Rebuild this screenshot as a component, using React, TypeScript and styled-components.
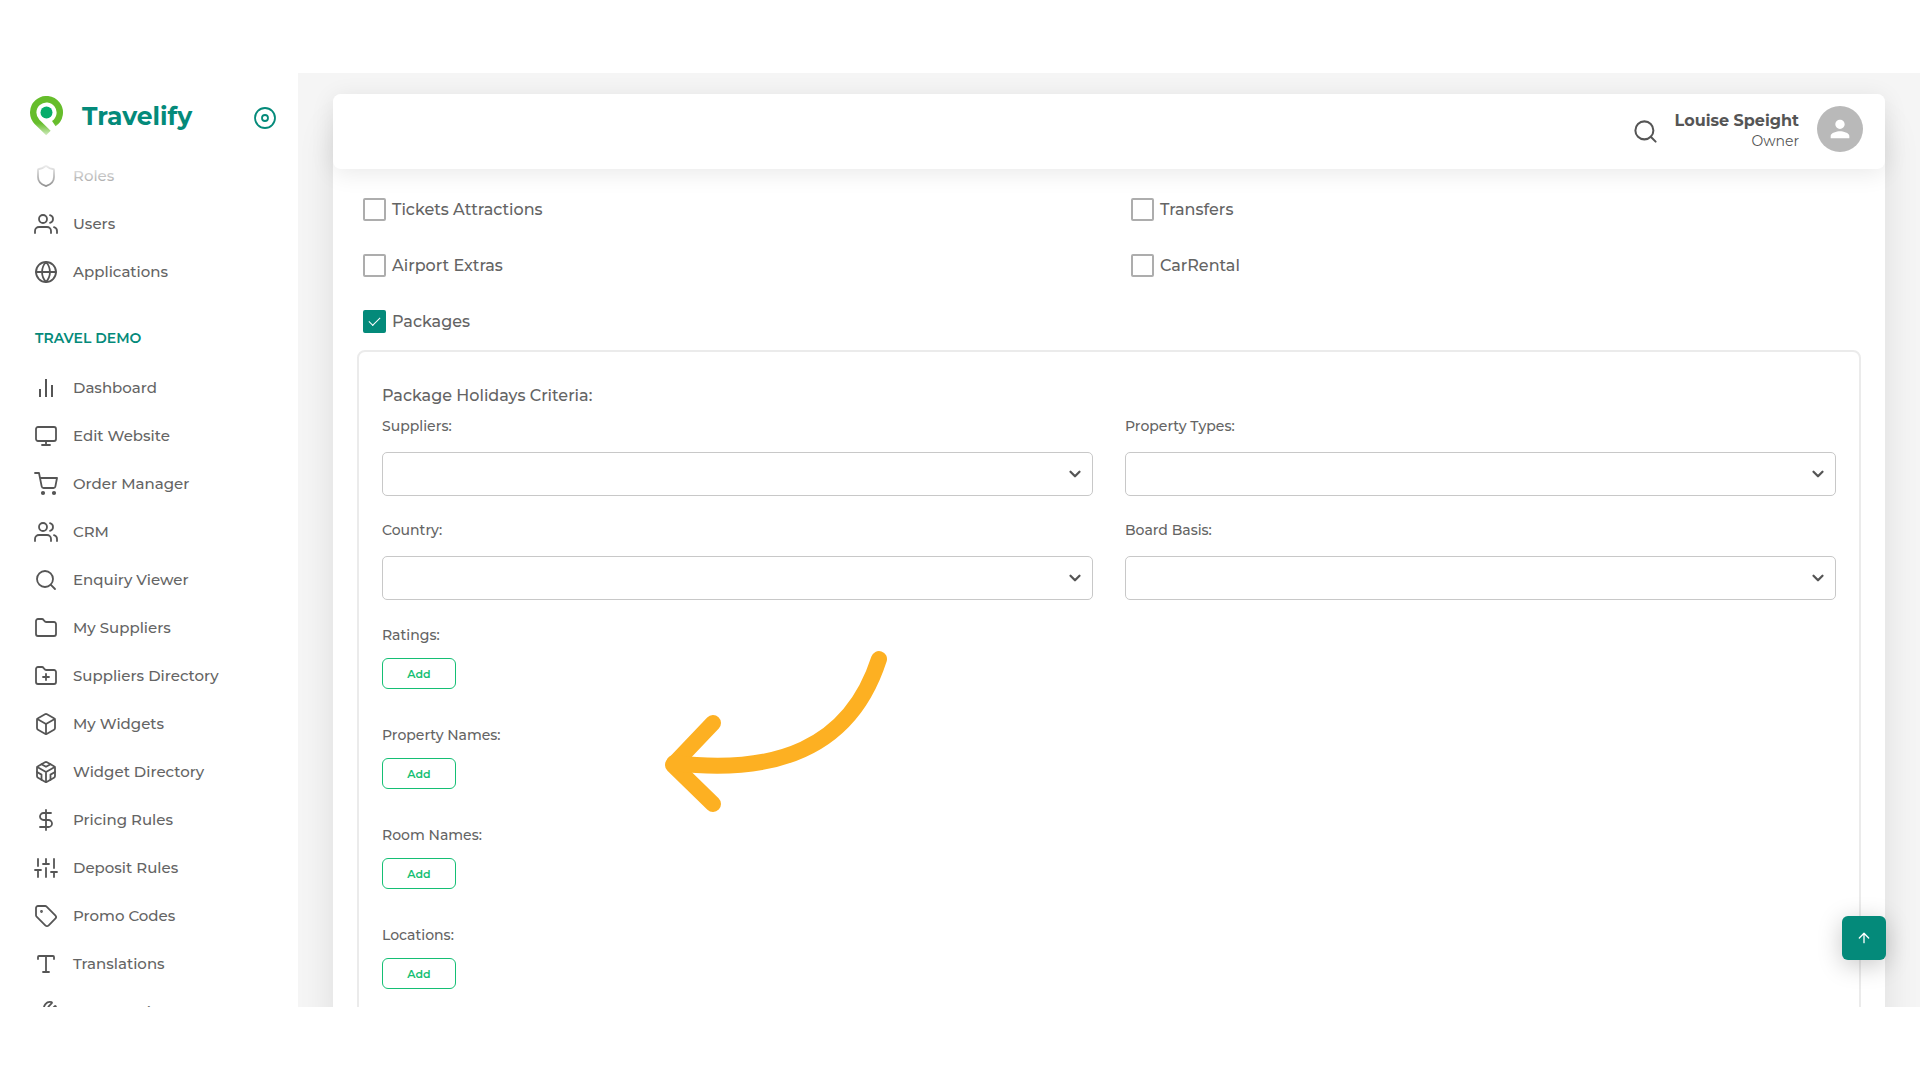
import React, { useState } from 'react';
import styled, { createGlobalStyle } from 'styled-components';
import {
  ArrowUp, Box, ChevronDown, DollarSign, Folder, FolderPlus, Search,
  Shield, Tag, Type, Wrench, Monitor,
} from 'lucide-react';

const teal = '#048a7a';
const green = '#14bf74';
const ink = '#646464';
const iconInk = '#555';
const shadow = '0 4px 24px rgba(0, 0, 0, 0.09)';

const GlobalStyle = createGlobalStyle`
  *, *::before, *::after { box-sizing: border-box; }
  body {
    margin: 0;
    background: #fff;
    color: ${ink};
    font-family: Montserrat, Inter, "Liberation Sans", sans-serif;
    font-size: 15px;
    font-weight: 500;
    line-height: 24px;
  }
  button, select, input { font: inherit; color: inherit; margin: 0; }
`;

const Page = styled.div`
  height: 100vh;
  padding: 73px 0;
`;

const Frame = styled.div`
  position: relative;
  display: flex;
  height: 100%;
  overflow: hidden;
`;

const Sidebar = styled.aside`
  display: flex;
  flex-direction: column;
  flex: 0 0 298px;
  background: #fff;
  overflow: hidden;
`;

const Brand = styled.div`
  position: relative;
  display: flex;
  align-items: center;
  gap: 18px;
  flex: 0 0 79px;
  padding: 7px 21px 0 30px;

  > button { padding-top: 4px; }

  &::after {
    content: '';
    position: absolute;
    left: 0;
    right: 0;
    top: 79px;
    height: 48px;
    background: linear-gradient(#fff 20%, rgba(255, 255, 255, 0));
  }
`;

const BrandName = styled.span`
  flex: 1;
  color: ${teal};
  font-size: 25px;
  font-weight: 700;
`;

const IconButton = styled.button<{ $color?: string }>`
  display: flex;
  padding: 0;
  border: 0;
  background: none;
  color: ${(p) => p.$color ?? iconInk};
  cursor: pointer;
`;

const NavList = styled.ul`
  margin: 0;
  padding: 0 0 0 34px;
  list-style: none;
`;

const NavLink = styled.a`
  display: flex;
  align-items: center;
  gap: 15px;
  height: 48px;
  color: inherit;
  text-decoration: none;

  svg { flex: none; color: ${iconInk}; }
`;

const NavHeading = styled.h2`
  margin: 0;
  padding: 30px 35px 14px;
  color: ${teal};
  font-size: 14px;
  line-height: 24px;
  font-weight: 600;
`;

const Main = styled.main`
  flex: 1;
  min-width: 0;
  padding: 21px 35px 0;
  background: #f5f5f5;
`;

const Panel = styled.div`
  height: 100%;
  border-radius: 8px 8px 0 0;
  background: #fff;
  box-shadow: 0 32px 36px rgba(0, 0, 0, 0.1);
`;

const TopBar = styled.header`
  display: flex;
  align-items: center;
  justify-content: flex-end;
  gap: 16px;
  height: 75px;
  padding: 0 22px;
  border-radius: 8px;
  background: #fff;
  box-shadow: ${shadow};
`;

const UserText = styled.div`
  display: flex;
  flex-direction: column;
  padding: 0 2px 2px 0;
  color: ${iconInk};
  text-align: right;
  line-height: 21px;
`;

const UserName = styled.strong`
  font-size: 16px;
  font-weight: 700;
`;

const UserRole = styled.span`
  font-size: 14px;
  font-weight: 400;
`;

const Avatar = styled.span`
  display: flex;
  align-items: center;
  justify-content: center;
  width: 46px;
  height: 46px;
  margin-bottom: 6px;
  border-radius: 50%;
  background: #b9b9b9;
`;

const Form = styled.form`
  padding: 29px 24px 0;
`;

const CheckGrid = styled.div`
  display: grid;
  grid-template-columns: 1fr 1fr;
  gap: 33px 32px;
  margin: 0 -6px 17px 6px;
`;

const CheckLabel = styled.label`
  display: flex;
  align-items: center;
  gap: 6px;
  height: 23px;
  font-size: 16px;
`;

const CheckBox = styled.input`
  appearance: none;
  display: grid;
  place-items: center;
  width: 23px;
  height: 23px;
  border: 2px solid #adadad;
  border-radius: 2px;
  background: #fff;

  &:checked {
    border-color: ${teal};
    background: ${teal};
  }

  &:checked::after {
    content: '';
    width: 11px;
    height: 6px;
    margin-bottom: 4px;
    border: solid #fff;
    border-width: 0 0 1px 1px;
    transform: rotate(-45deg);
  }
`;

const Criteria = styled.fieldset`
  height: 720px;
  margin: 0;
  min-width: 0;
  padding: 32px 23px;
  border: 2px solid #ebebeb;
  border-radius: 8px;
`;

const CriteriaTitle = styled.h3`
  margin: 0 0 6px;
  font-size: 16px;
  line-height: 24px;
  font-weight: 500;
`;

const FieldGrid = styled.div`
  display: grid;
  grid-template-columns: 1fr 1fr;
  gap: 21px 32px;
  margin-bottom: 22px;
`;

const Field = styled.div`
  display: flex;
  flex-direction: column;
  gap: 14px;
  font-size: 14px;
`;

const SelectWrap = styled.div`
  display: grid;
  align-items: center;
  margin-bottom: 1px;

  > * { grid-area: 1 / 1; }
  > svg { justify-self: end; margin-right: 9px; pointer-events: none; }
`;

const Select = styled.select`
  appearance: none;
  width: 100%;
  height: 44px;
  padding: 0 32px 0 12px;
  border: 1px solid #c8c8c8;
  border-radius: 5px;
  background: #fff;
`;

const AddList = styled.div`
  display: flex;
  flex-direction: column;
  gap: 34px;
`;

const AddRow = styled.div`
  display: flex;
  flex-direction: column;
  align-items: flex-start;
  gap: 11px;
  font-size: 14px;
`;

const AddButton = styled.button`
  width: 74px;
  height: 31px;
  padding: 0;
  border: 1px solid ${green};
  border-radius: 6px;
  background: #fff;
  color: ${green};
  font-size: 11px;
  font-weight: 600;
  cursor: pointer;
`;

const ScrollTop = styled.button`
  position: absolute;
  right: 34px;
  bottom: 47px;
  display: flex;
  align-items: center;
  justify-content: center;
  width: 44px;
  height: 44px;
  padding: 0;
  border: 0;
  border-radius: 6px;
  background: ${teal};
  color: #fff;
  box-shadow: 0 5px 24px rgba(0, 0, 0, 0.22);
`;

const Pointer = styled.svg`
  position: absolute;
  left: 660px;
  top: 573px;
  pointer-events: none;
`;

const Logo = () => (
  <svg width="34" height="40" viewBox="0 0 34 40" fill="none" aria-hidden="true">
    <defs>
      <linearGradient id="pin" x1="0" y1="0" x2="0" y2="40" gradientUnits="userSpaceOnUse">
        <stop offset="0.68" stopColor="#66bd2b" />
        <stop offset="0.98" stopColor="#66bd2b" stopOpacity="0.3" />
      </linearGradient>
    </defs>
    <path d="M23.8 27.6A13.3 13.3 0 1 0 7.1 25.9L18.4 37" stroke="url(#pin)" strokeWidth="6.4" />
    <circle cx="16.5" cy="16.5" r="6" fill="#06ad6b" />
  </svg>
);

const weight = 1.8;

const strokeProps = {
  width: 24, height: 24, viewBox: '0 0 24 24', fill: 'none', stroke: 'currentColor',
  strokeWidth: weight, strokeLinecap: 'round' as const, strokeLinejoin: 'round' as const,
};

const DiscGlyph = () => (
  <svg {...strokeProps} aria-hidden="true">
    <circle cx="12" cy="12" r="10" />
    <circle cx="12" cy="12" r="3" />
  </svg>
);

const UsersGlyph = () => (
  <svg {...strokeProps} aria-hidden="true">
    <path d="M17 21v-2a4 4 0 0 0-4-4H5a4 4 0 0 0-4 4v2" />
    <circle cx="9" cy="7" r="4" />
    <path d="M23 21v-2a4 4 0 0 0-3-3.87M16 3.13a4 4 0 0 1 0 7.75" />
  </svg>
);

const GlobeGlyph = () => (
  <svg {...strokeProps} aria-hidden="true">
    <circle cx="12" cy="12" r="10" />
    <path d="M2 12h20M12 2a15.3 15.3 0 0 1 4 10 15.3 15.3 0 0 1-4 10 15.3 15.3 0 0 1-4-10 15.3 15.3 0 0 1 4-10z" />
  </svg>
);

const BarsGlyph = () => (
  <svg {...strokeProps} strokeWidth={2} strokeLinecap="butt" aria-hidden="true">
    <path d="M6 21v-8M12 21V3M18 21V9" />
  </svg>
);

const CartGlyph = () => (
  <svg {...strokeProps} aria-hidden="true">
    <circle cx="9" cy="21" r="1.2" fill="currentColor" />
    <circle cx="20" cy="21" r="1.2" fill="currentColor" />
    <path d="M1 1h4l2.68 13.39a2 2 0 0 0 2 1.61h9.72a2 2 0 0 0 2-1.61L23 6H6" />
  </svg>
);

const SlidersGlyph = () => (
  <svg {...strokeProps} aria-hidden="true">
    <path d="M4 21v-7M4 10V3M12 21v-9M12 8V3M20 21v-5M20 12V3M1 14h6M9 8h6M17 16h6" />
  </svg>
);

const CodesandboxGlyph = () => (
  <svg {...strokeProps} aria-hidden="true">
    <path d="M21 16V8a2 2 0 0 0-1-1.73l-7-4a2 2 0 0 0-2 0l-7 4A2 2 0 0 0 3 8v8a2 2 0 0 0 1 1.73l7 4a2 2 0 0 0 2 0l7-4A2 2 0 0 0 21 16z" />
    <path d="M7.5 4.21L12 6.81l4.5-2.6M7.5 19.79V14.6L3 12M21 12l-4.5 2.6v5.19M3.27 6.96L12 12.01l8.73-5.05M12 22.08V12" />
  </svg>
);

const accountNav = [
  { label: 'Roles', icon: <Shield strokeWidth={weight} /> },
  { label: 'Users', icon: <UsersGlyph /> },
  { label: 'Applications', icon: <GlobeGlyph /> },
];

const siteNav = [
  { label: 'Dashboard', icon: <BarsGlyph /> },
  { label: 'Edit Website', icon: <Monitor strokeWidth={weight} /> },
  { label: 'Order Manager', icon: <CartGlyph /> },
  { label: 'CRM', icon: <UsersGlyph /> },
  { label: 'Enquiry Viewer', icon: <Search strokeWidth={weight} /> },
  { label: 'My Suppliers', icon: <Folder strokeWidth={weight} /> },
  { label: 'Suppliers Directory', icon: <FolderPlus strokeWidth={weight} /> },
  { label: 'My Widgets', icon: <Box strokeWidth={weight} /> },
  { label: 'Widget Directory', icon: <CodesandboxGlyph /> },
  { label: 'Pricing Rules', icon: <DollarSign strokeWidth={weight} /> },
  { label: 'Deposit Rules', icon: <SlidersGlyph /> },
  { label: 'Promo Codes', icon: <Tag strokeWidth={weight} /> },
  { label: 'Translations', icon: <Type strokeWidth={weight} /> },
  { label: 'Page Settings', icon: <Wrench strokeWidth={weight} /> },
];

const products = ['Tickets Attractions', 'Transfers', 'Airport Extras', 'CarRental', 'Packages'];
const selects = ['Suppliers', 'Property Types', 'Country', 'Board Basis'];
const lists = ['Ratings', 'Property Names', 'Room Names', 'Locations'];

const Nav = ({ items }: { items: { label: string; icon: React.ReactNode }[] }) => (
  <NavList>
    {items.map((item) => (
      <li key={item.label}>
        <NavLink href="#">
          {item.icon}
          {item.label}
        </NavLink>
      </li>
    ))}
  </NavList>
);

export default function App() {
  const [checked, setChecked] = useState<string[]>(['Packages']);
  const toggle = (name: string) =>
    setChecked((list) => (list.includes(name) ? list.filter((n) => n !== name) : [...list, name]));

  return (
    <Page>
      <GlobalStyle />
      <Frame>
        <Sidebar>
          <Brand>
            <Logo />
            <BrandName>Travelify</BrandName>
            <IconButton type="button" aria-label="Pin menu" $color={teal}>
              <DiscGlyph />
            </IconButton>
          </Brand>
          <nav>
            <Nav items={accountNav} />
            <NavHeading>TRAVEL DEMO</NavHeading>
            <Nav items={siteNav} />
          </nav>
        </Sidebar>
        <Main>
          <Panel>
            <TopBar>
              <IconButton type="button" aria-label="Search">
                <Search size={27} strokeWidth={weight} />
              </IconButton>
              <UserText>
                <UserName>Louise Speight</UserName>
                <UserRole>Owner</UserRole>
              </UserText>
              <Avatar>
                <svg width="28" height="28" viewBox="0 0 24 24" fill="#fff" aria-hidden="true">
                  <path d="M12 12c2.21 0 4-1.79 4-4s-1.79-4-4-4-4 1.79-4 4 1.79 4 4 4zm0 2c-2.67 0-8 1.34-8 4v2h16v-2c0-2.66-5.33-4-8-4z" />
                </svg>
              </Avatar>
            </TopBar>
            <Form>
              <CheckGrid>
                {products.map((name) => (
                  <CheckLabel key={name}>
                    <CheckBox type="checkbox" checked={checked.includes(name)} onChange={() => toggle(name)} />
                    {name}
                  </CheckLabel>
                ))}
              </CheckGrid>
              <Criteria>
                <CriteriaTitle>Package Holidays Criteria:</CriteriaTitle>
                <FieldGrid>
                  {selects.map((name) => (
                    <Field key={name}>
                      <label htmlFor={name}>{name}:</label>
                      <SelectWrap>
                        <Select id={name} />
                        <ChevronDown size={18} strokeWidth={3} color={iconInk} />
                      </SelectWrap>
                    </Field>
                  ))}
                </FieldGrid>
                <AddList>
                  {lists.map((name) => (
                    <AddRow key={name}>
                      <span>{name}:</span>
                      <AddButton type="button">Add</AddButton>
                    </AddRow>
                  ))}
                </AddList>
              </Criteria>
            </Form>
          </Panel>
        </Main>
        <Pointer width="232" height="172" viewBox="660 646 232 172" fill="none" stroke="#fdb022" strokeWidth="16" strokeLinecap="round" strokeLinejoin="round" aria-hidden="true">
          <path d="M713 723L673 765L713 804" />
          <path d="M674 763C775 775 850 749 879 659" />
        </Pointer>
        <ScrollTop type="button" aria-label="Back to top">
          <ArrowUp size={16} strokeWidth={2} />
        </ScrollTop>
      </Frame>
    </Page>
  );
}
